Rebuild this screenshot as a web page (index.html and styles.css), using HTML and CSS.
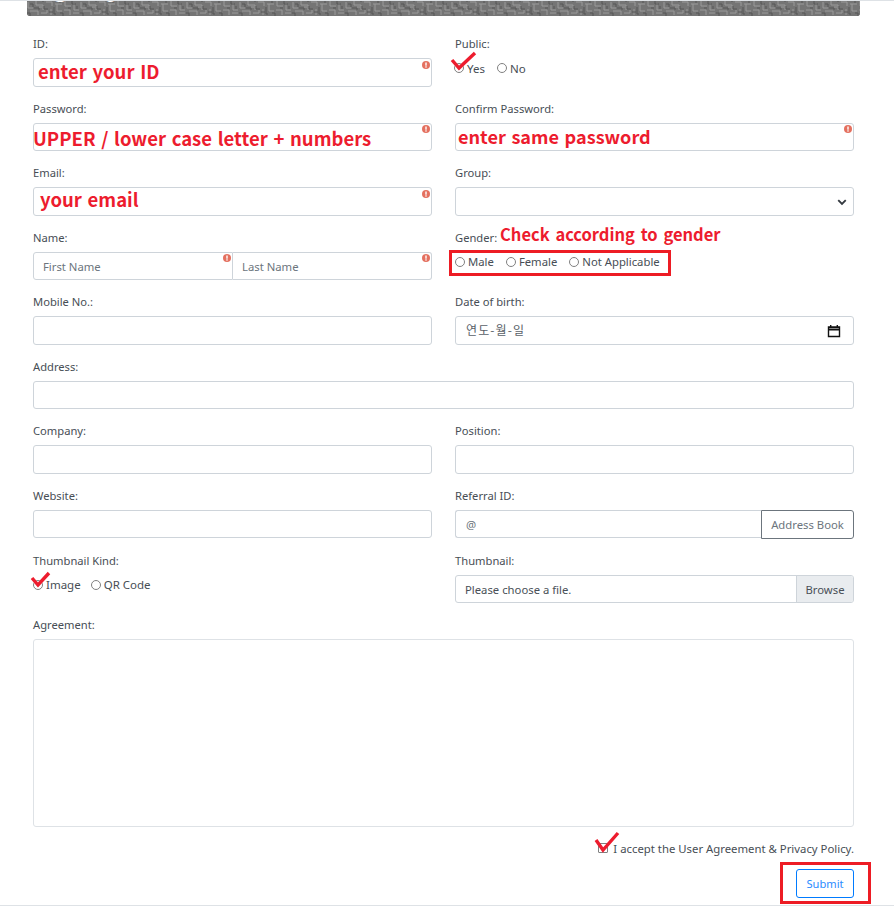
FILE: index.html
```html
<!DOCTYPE html>
<html lang="en">
<head>
<meta charset="utf-8">
<title>Sign up</title>
<link rel="stylesheet" href="styles.css">
</head>
<body>
<div class="page">
  <div class="banner">
    <svg class="banner-tex" width="833" height="15">
      <defs>
        <pattern id="tex" width="53" height="15" patternUnits="userSpaceOnUse">
          <rect width="53" height="15" fill="#757575"/>
          <path class="tex-light" d="M1 1v6h5M9 0v4h7v5M3 10h8v4M14 12h6v-3M19 1h6v4M24 8v6M28 3h7M30 3v7h5M38 0v5h6M37 9h6v5M47 2v7h5M46 12h6M12 6h3"/>
          <path class="tex-dark" d="M3 3h3v3M0 12h3v3M7 7h5v2M17 5v3h4M22 11h4M27 6v7h2M33 0v2M33 12h3v3M41 7h3M45 0v3h4M50 5v3M16 0v1"/>
        </pattern>
      </defs>
      <rect width="833" height="15" fill="url(#tex)"/>
    </svg>
    <h1 class="banner-title">Sign up</h1>
  </div>
  <form class="form">
    <div class="grid">
      <div class="field">
        <label class="lbl">ID:</label>
        <div class="input"><svg class="err" viewBox="0 0 8 8"><circle cx="4" cy="4" r="4"/><rect x="3.3" y="1.5" width="1.4" height="3.2" fill="#fff"/><rect x="3.3" y="5.3" width="1.4" height="1.3" fill="#fff"/></svg></div>
        <span class="note note-id">enter your ID</span>
      </div>
      <div class="field">
        <label class="lbl">Public:</label>
        <div class="radios radios-public">
          <span class="opt"><i class="radio"></i>Yes</span>
          <span class="opt"><i class="radio"></i>No</span>
        </div>
        <svg class="tick tick-public" viewBox="0 0 24 20"><path d="M1 8 L8 16 L24 1"/></svg>
      </div>
      <div class="field">
        <label class="lbl">Password:</label>
        <div class="input"><svg class="err" viewBox="0 0 8 8"><circle cx="4" cy="4" r="4"/><rect x="3.3" y="1.5" width="1.4" height="3.2" fill="#fff"/><rect x="3.3" y="5.3" width="1.4" height="1.3" fill="#fff"/></svg></div>
        <span class="note note-pw">UPPER / lower case letter + numbers</span>
      </div>
      <div class="field">
        <label class="lbl">Confirm Password:</label>
        <div class="input"><svg class="err" viewBox="0 0 8 8"><circle cx="4" cy="4" r="4"/><rect x="3.3" y="1.5" width="1.4" height="3.2" fill="#fff"/><rect x="3.3" y="5.3" width="1.4" height="1.3" fill="#fff"/></svg></div>
        <span class="note note-cpw">enter same password</span>
      </div>
      <div class="field">
        <label class="lbl">Email:</label>
        <div class="input"><svg class="err" viewBox="0 0 8 8"><circle cx="4" cy="4" r="4"/><rect x="3.3" y="1.5" width="1.4" height="3.2" fill="#fff"/><rect x="3.3" y="5.3" width="1.4" height="1.3" fill="#fff"/></svg></div>
        <span class="note note-email">your email</span>
      </div>
      <div class="field">
        <label class="lbl">Group:</label>
        <div class="input input-select"><svg class="chev" viewBox="0 0 16 16"><path d="M2 5l6 6 6-6"/></svg></div>
      </div>
      <div class="field">
        <label class="lbl">Name:</label>
        <div class="input-pair">
          <div class="input pair-left">First Name<svg class="err" viewBox="0 0 8 8"><circle cx="4" cy="4" r="4"/><rect x="3.3" y="1.5" width="1.4" height="3.2" fill="#fff"/><rect x="3.3" y="5.3" width="1.4" height="1.3" fill="#fff"/></svg></div>
          <div class="input pair-right">Last Name<svg class="err" viewBox="0 0 8 8"><circle cx="4" cy="4" r="4"/><rect x="3.3" y="1.5" width="1.4" height="3.2" fill="#fff"/><rect x="3.3" y="5.3" width="1.4" height="1.3" fill="#fff"/></svg></div>
        </div>
      </div>
      <div class="field">
        <label class="lbl">Gender:</label>
        <div class="radios radios-gender">
          <span class="opt"><i class="radio"></i>Male</span>
          <span class="opt"><i class="radio"></i>Female</span>
          <span class="opt"><i class="radio"></i>Not Applicable</span>
        </div>
        <span class="note note-gender">Check according to gender</span>
        <div class="redbox redbox-gender"></div>
      </div>
      <div class="field">
        <label class="lbl">Mobile No.:</label>
        <div class="input"></div>
      </div>
      <div class="field">
        <label class="lbl">Date of birth:</label>
        <div class="input input-date">연도-월-일<svg class="cal" viewBox="0 0 14 14"><path d="M1.5 3h11v9.5h-11z M1.5 3.8h11v2h-11z M3.7 1v2 M10.3 1v2"/></svg></div>
      </div>
      <div class="field field-wide">
        <label class="lbl">Address:</label>
        <div class="input"></div>
      </div>
      <div class="field">
        <label class="lbl">Company:</label>
        <div class="input"></div>
      </div>
      <div class="field">
        <label class="lbl">Position:</label>
        <div class="input"></div>
      </div>
      <div class="field">
        <label class="lbl">Website:</label>
        <div class="input"></div>
      </div>
      <div class="field">
        <label class="lbl">Referral ID:</label>
        <div class="input-pair">
          <div class="input pair-at">@</div>
          <div class="addr">Address Book</div>
        </div>
      </div>
      <div class="field">
        <label class="lbl">Thumbnail Kind:</label>
        <div class="radios radios-thumb">
          <span class="opt"><i class="radio"></i>Image</span>
          <span class="opt"><i class="radio"></i>QR Code</span>
        </div>
        <svg class="tick tick-thumb" viewBox="0 0 24 20"><path d="M1 6 L7 13 L18 1"/></svg>
      </div>
      <div class="field">
        <label class="lbl">Thumbnail:</label>
        <div class="input input-file"><span class="file-name">Please choose a file.</span><span class="browse">Browse</span></div>
      </div>
      <div class="field field-wide field-agreement">
        <label class="lbl">Agreement:</label>
        <div class="agreement"></div>
      </div>
    </div>
    <div class="accept">
      <i class="check"></i><span>I accept the User Agreement &amp; Privacy Policy.</span>
      <svg class="tick tick-accept" viewBox="0 0 24 20"><path d="M1 8 L8 18 L23 1"/></svg>
    </div>
    <div class="actions">
      <button type="button" class="submit">Submit</button>
      <div class="redbox redbox-submit"></div>
    </div>
  </form>
</div>
</body>
</html>
```
FILE: styles.css
```css
* { box-sizing: border-box; }
html, body { margin: 0; padding: 0; background: #fff; }
body {
  font-family: "Noto Sans", "Open Sans", sans-serif;
  font-size: 11.3px;
  color: #495057;
  height: 906px;
  overflow: hidden;
}
.page {
  height: 906px;
  border-top: 1px solid #dee2e6;
  border-bottom: 1px solid #dee2e6;
  padding: 0 34px 0 27px;
}
.banner {
  position: relative;
  width: 833px;
  height: 15px;
  overflow: hidden;
  border-radius: 0 0 3px 3px;
  background-color: #757575;
}
.banner-tex { position: absolute; left: 0; top: 0; }
.tex-light { fill: none; stroke: #9a9a9a; stroke-width: 1; }
.tex-dark { fill: none; stroke: #555; stroke-width: 1; }
.banner-title {
  position: relative;
  margin: -28px 0 0 1px;
  font: 400 26px/32px "Liberation Serif", serif;
  letter-spacing: 2px;
  color: #fff;
}
.form { padding: 0 0 0 6px; width: 827px; }
.grid {
  display: grid;
  grid-template-columns: 399px 399px;
  column-gap: 23px;
  row-gap: 12px;
  padding-top: 22.15px;
}
.field { position: relative; height: 52.55px; }
.field-wide { grid-column: 1 / 3; }
.field-agreement { height: 207px; }
.lbl { display: block; height: 20px; line-height: 11px; font-size: 11.2px; color: #474e55; }
.input {
  position: relative;
  height: 28.5px;
  background: #fff;
  border: 1px solid #ced4da;
  border-radius: 3px;
  line-height: 27.5px;
  color: #6c757d;
}
.err {
  position: absolute;
  top: 1.5px;
  right: 1.3px;
  width: 8px;
  height: 8px;
  fill: #e4705f;
}
.note {
  position: absolute;
  font-family: "Noto Sans CJK KR", "Noto Sans", sans-serif;
  font-weight: 700;
  font-size: 18.5px;
  line-height: 24px;
  word-spacing: 1.5px;
  color: #ed1c2e;
  white-space: nowrap;
}
.note-id { left: 5px; top: 21px; }
.note-pw { left: 0; top: 23.5px; }
.note-cpw { left: 3px; top: 21.5px; font-size: 18.1px; }
.note-email { left: 7px; top: 20px; }
.note-gender { left: 45px; top: -10px; font-size: 16.5px; word-spacing: 2px; }
.radios { display: flex; align-items: center; height: 20px; font-size: 11.5px; color: #474e55; }
.radios-public { gap: 12px; margin-top: 0; margin-left: -1px; }
.radios-gender { gap: 12px; margin-top: 0; font-size: 11.3px; }
.radios-thumb { gap: 10px; margin-top: 0; }
.opt { display: inline-flex; align-items: center; gap: 3px; }
.radio {
  display: inline-block;
  width: 10px;
  height: 10px;
  border: 1px solid #808080;
  border-radius: 50%;
  background: #fff;
}
.tick { position: absolute; width: 24px; height: 20px; overflow: visible; }
.tick path { fill: none; stroke: #ed1c2e; stroke-width: 3.4; }
.tick-public { left: -4px; top: 14px; }
.tick-thumb { left: -2px; top: 17.5px; }
.tick-accept { left: 562px; top: -7px; }
.redbox { position: absolute; border: 3px solid #ed1c24; pointer-events: none; }
.redbox-gender { left: -6px; top: 18.5px; width: 222px; height: 26px; }
.input-select .chev {
  position: absolute;
  right: 6px;
  top: 9px;
  width: 10px;
  height: 10px;
  fill: none;
  stroke: #343a40;
  stroke-width: 3;
}
.input-pair { display: flex; height: 28.5px; }
.pair-left { width: 200px; padding-left: 9px; border-radius: 3px 0 0 3px; }
.pair-right { flex: 1; padding-left: 9px; border-left: 0; border-radius: 0 3px 3px 0; }
.pair-at { flex: 1; padding-left: 10px; border-radius: 3px 0 0 3px; border-right: 0; }
.addr {
  width: 93px;
  height: 29px;
  line-height: 27px;
  text-align: center;
  border: 1px solid #6c757d;
  border-radius: 0 3px 3px 0;
  color: #6c757d;
}
.input-date { padding-left: 10px; font-family: "Noto Sans CJK KR", sans-serif; font-size: 12px; line-height: 26.5px; letter-spacing: 1.1px; color: #5a6168; }
.cal {
  position: absolute;
  right: 12px;
  top: 7px;
  width: 14px;
  height: 14px;
  fill: none;
  stroke: #111;
  stroke-width: 1.4;
}
.input-file { display: flex; justify-content: space-between; padding-left: 9px; overflow: hidden; color: #495057; }
.browse {
  width: 57px;
  text-align: center;
  background: #e9ecef;
  border-left: 1px solid #ced4da;
  color: #495057;
}
.agreement { height: 188px; border: 1px solid #dee2e6; border-radius: 3px; background: #fff; }
.accept {
  position: relative;
  display: flex;
  justify-content: flex-end;
  align-items: center;
  gap: 5px;
  width: 821px;
  height: 18px;
  margin-top: 13px;
  font-size: 11.35px;
  color: #474e55;
}
.check {
  width: 10px;
  height: 10px;
  border: 1px solid #808080;
  border-radius: 1px;
  background: #fff;
}
.actions {
  position: relative;
  display: flex;
  justify-content: flex-end;
  width: 821px;
  margin-top: 12px;
}
.submit {
  width: 58px;
  height: 29px;
  padding: 0;
  background: #fff;
  border: 1px solid #007bff;
  border-radius: 3px;
  color: #2a8cff;
  font: 11.1px "Noto Sans", sans-serif;
}
.redbox-submit { right: -17px; top: -7px; width: 91px; height: 42px; }
```
